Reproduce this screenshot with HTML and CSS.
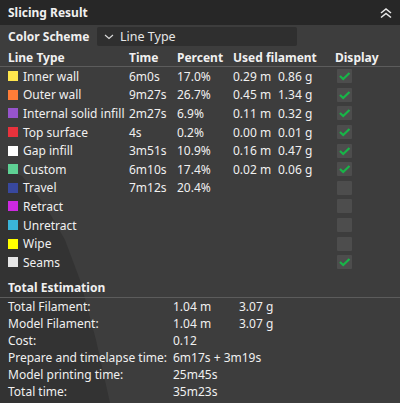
FILE: index.html
```html
<!DOCTYPE html>
<html lang="en">
  <head>
    <meta charset="UTF-8" />
    <meta name="viewport" content="width=device-width, initial-scale=1.0" />
    <title>Slicing Result</title>
    <link rel="stylesheet" href="styles.css">
  </head>
  <body>
    <div class="panel">
      <!-- the build plate showing through the panel -->
      <div class="backdrop"></div>

      <div class="title-bar">
        <span class="title">Slicing Result</span>
        <svg class="collapse" width="14" height="12" viewBox="0 0 14 12">
          <path d="M2 6 L7 2 L12 6 M2 10.5 L7 6.5 L12 10.5" fill="none" stroke="#e8e8e8" stroke-width="1.6" />
        </svg>
      </div>

      <div class="scheme">
        <span class="scheme-label">Color Scheme</span>
        <div class="combo">
          <svg width="10" height="6" viewBox="0 0 10 6">
            <path d="M1 1 L5 4.5 L9 1" fill="none" stroke="#dcdcdc" stroke-width="1.1" />
          </svg>
          <span>Line Type</span>
        </div>
      </div>

      <div class="grid head">
        <span>Line Type</span>
        <span>Time</span>
        <span>Percent</span>
        <span>Used filament</span>
        <span>Display</span>
      </div>

      <div class="lines">
        <div class="grid row">
          <span class="name"><i class="swatch" style="background:#ffe64d"></i>Inner wall</span>
          <span>6m0s</span><span>17.0%</span>
          <span class="used"><span>0.29 m</span><span>0.86 g</span></span>
          <span class="check on"></span>
        </div>
        <div class="grid row">
          <span class="name"><i class="swatch" style="background:#ff7d38"></i>Outer wall</span>
          <span>9m27s</span><span>26.7%</span>
          <span class="used"><span>0.45 m</span><span>1.34 g</span></span>
          <span class="check on"></span>
        </div>
        <div class="grid row">
          <span class="name"><i class="swatch" style="background:#9654cc"></i>Internal solid infill</span>
          <span>2m27s</span><span>6.9%</span>
          <span class="used"><span>0.11 m</span><span>0.32 g</span></span>
          <span class="check on"></span>
        </div>
        <div class="grid row">
          <span class="name"><i class="swatch" style="background:#e8323c"></i>Top surface</span>
          <span>4s</span><span>0.2%</span>
          <span class="used"><span>0.00 m</span><span>0.01 g</span></span>
          <span class="check on"></span>
        </div>
        <div class="grid row">
          <span class="name"><i class="swatch" style="background:#ffffff"></i>Gap infill</span>
          <span>3m51s</span><span>10.9%</span>
          <span class="used"><span>0.16 m</span><span>0.47 g</span></span>
          <span class="check on"></span>
        </div>
        <div class="grid row">
          <span class="name"><i class="swatch" style="background:#5ed194"></i>Custom</span>
          <span>6m10s</span><span>17.4%</span>
          <span class="used"><span>0.02 m</span><span>0.06 g</span></span>
          <span class="check on"></span>
        </div>
        <div class="grid row">
          <span class="name"><i class="swatch" style="background:#38489e"></i>Travel</span>
          <span>7m12s</span><span>20.4%</span>
          <span></span>
          <span class="check"></span>
        </div>
        <div class="grid row">
          <span class="name"><i class="swatch" style="background:#cd29e1"></i>Retract</span>
          <span></span><span></span><span></span>
          <span class="check"></span>
        </div>
        <div class="grid row">
          <span class="name"><i class="swatch" style="background:#3ab4d9"></i>Unretract</span>
          <span></span><span></span><span></span>
          <span class="check"></span>
        </div>
        <div class="grid row">
          <span class="name"><i class="swatch" style="background:#ffff00"></i>Wipe</span>
          <span></span><span></span><span></span>
          <span class="check"></span>
        </div>
        <div class="grid row">
          <span class="name"><i class="swatch" style="background:#e6e6e6"></i>Seams</span>
          <span></span><span></span><span></span>
          <span class="check on"></span>
        </div>
      </div>

      <div class="section">Total Estimation</div>

      <div class="totals">
        <div class="total"><span>Total Filament:</span><span class="used"><span>1.04 m</span><span>3.07 g</span></span></div>
        <div class="total"><span>Model Filament:</span><span class="used"><span>1.04 m</span><span>3.07 g</span></span></div>
        <div class="total"><span>Cost:</span><span>0.12</span></div>
        <div class="total"><span>Prepare and timelapse time:</span><span>6m17s + 3m19s</span></div>
        <div class="total"><span>Model printing time:</span><span>25m45s</span></div>
        <div class="total"><span>Total time:</span><span>35m23s</span></div>
      </div>
    </div>
  </body>
</html>
```

FILE: styles.css
```css
* {
  box-sizing: border-box;
}
body {
  margin: 0;
  background-color: #3c3c3c;
  font-family: "Noto Sans", "DejaVu Sans", sans-serif;
  font-size: 12px;
  color: #f0f0f0;
}
.panel {
  position: relative;
  width: 400px;
  height: 403px;
  overflow: hidden;
  background-color: #3d3d3d;
}
.backdrop {
  position: absolute;
  inset: 0;
  background-color: #333333;
  clip-path: polygon(0 168px, 22px 176px, 45px 205px, 65px 240px, 80px 280px, 96px 340px, 110px 403px, 0 403px);
}
.title-bar,
.scheme,
.grid,
.lines,
.section,
.totals {
  position: relative;
}

.title-bar {
  height: 25px;
  background-color: #272727;
  display: flex;
  align-items: center;
  justify-content: space-between;
  padding: 0 8px;
}
.title {
  font-weight: bold;
}
.collapse {
  margin-right: -1px;
}

.scheme {
  display: flex;
  align-items: center;
  height: 23px;
  padding-left: 8px;
}
.scheme-label {
  font-weight: bold;
  width: 89px;
}
.combo {
  width: 200px;
  height: 19px;
  background-color: #2f2f2f;
  border-radius: 2px;
  display: flex;
  align-items: center;
  gap: 6px;
  padding-left: 7px;
  color: #e6e6e6;
  font-size: 12.5px;
}

.grid {
  display: grid;
  grid-template-columns: 121px 48px 56px 102px auto;
  padding-left: 8px;
  align-items: center;
  white-space: nowrap;
}
.head {
  height: 19px;
  font-weight: bold;
  border-bottom: 1px solid #5c5c5c;
}
.row {
  height: 18.6px;
}
.name {
  display: flex;
  align-items: center;
}
.swatch {
  width: 10px;
  height: 10px;
  margin-right: 5px;
  flex-shrink: 0;
}
.used {
  display: flex;
}
.used > span:first-child {
  width: 45px;
}
.total .used > span:first-child {
  width: 66px;
}
.check {
  width: 15px;
  height: 14px;
  margin-left: 2px;
  background-color: #4d4d4d;
  border-radius: 1px;
}
.check.on {
  background-image: url("data:image/svg+xml;utf8,<svg xmlns='http://www.w3.org/2000/svg' width='15' height='14' viewBox='0 0 15 14'><path d='M3 7 L6.2 10 L12.5 4' fill='none' stroke='%2318b548' stroke-width='2.2'/></svg>");
}

.section {
  height: 19px;
  margin-top: 7px;
  padding-left: 8px;
  font-weight: bold;
  line-height: 18px;
  border-bottom: 1px solid #5c5c5c;
}
.total {
  display: flex;
  height: 17px;
  align-items: center;
  padding-left: 8px;
  white-space: nowrap;
}
.total > span:first-child {
  width: 165px;
}
```
